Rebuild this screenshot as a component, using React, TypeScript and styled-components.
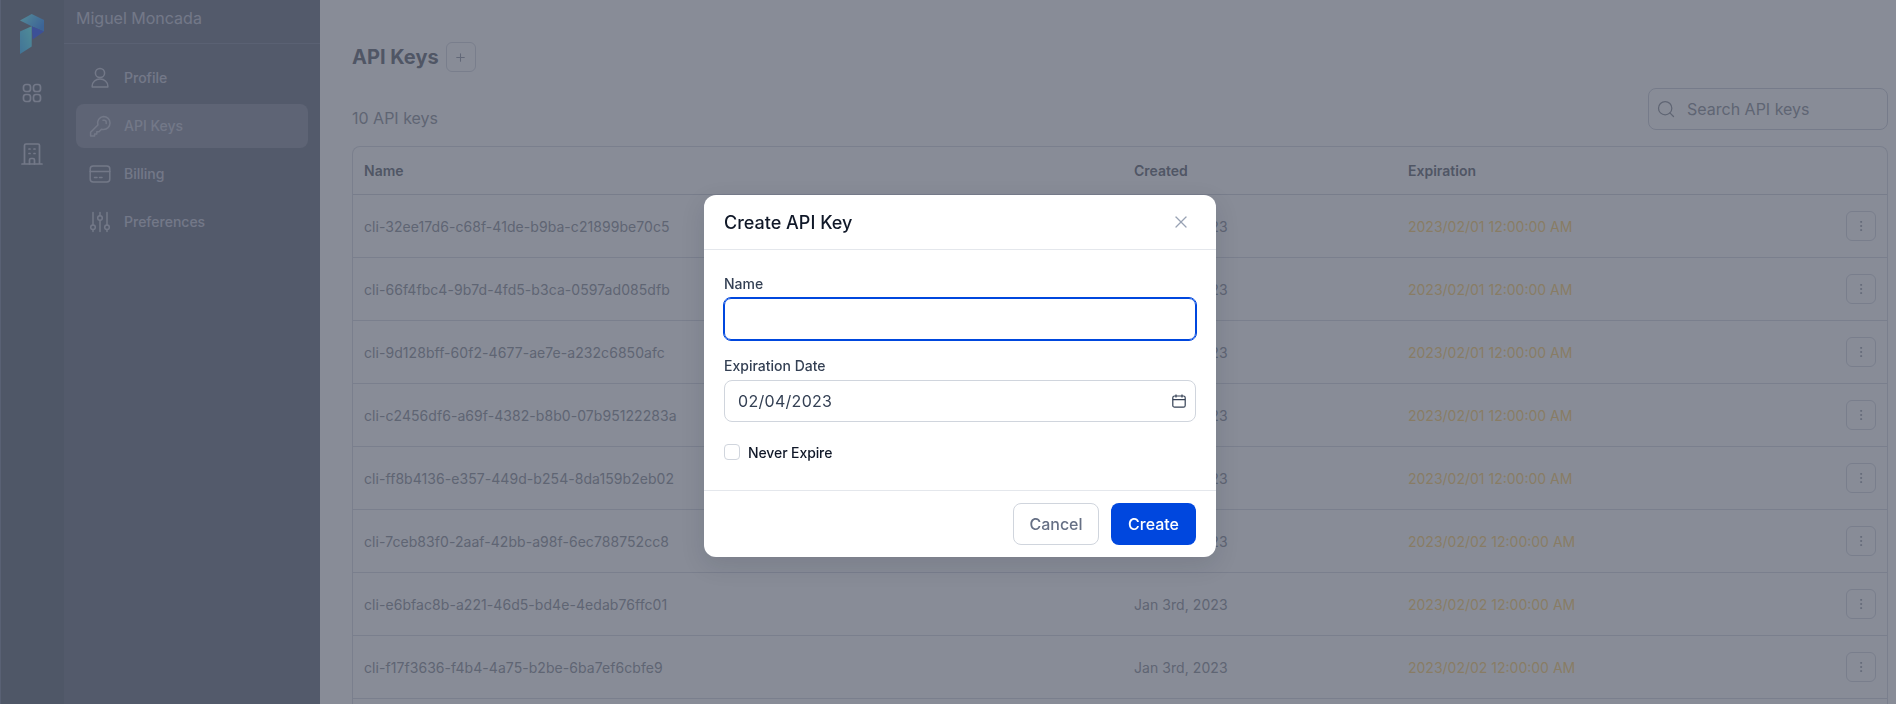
import React from 'react'
import styled, { createGlobalStyle } from 'styled-components'
import { X, Search, Plus, EllipsisVertical } from 'lucide-react'

const keys = [
  { name: 'cli-32ee17d6-c68f-41de-b9ba-c21899be70c5', expires: '2023/02/01 12:00:00 AM' },
  { name: 'cli-66f4fbc4-9b7d-4fd5-b3ca-0597ad085dfb', expires: '2023/02/01 12:00:00 AM' },
  { name: 'cli-9d128bff-60f2-4677-ae7e-a232c6850afc', expires: '2023/02/01 12:00:00 AM' },
  { name: 'cli-c2456df6-a69f-4382-b8b0-07b95122283a', expires: '2023/02/01 12:00:00 AM' },
  { name: 'cli-ff8b4136-e357-449d-b254-8da159b2eb02', expires: '2023/02/01 12:00:00 AM' },
  { name: 'cli-7ceb83f0-2aaf-42bb-a98f-6ec788752cc8', expires: '2023/02/02 12:00:00 AM' },
  { name: 'cli-e6bfac8b-a221-46d5-bd4e-4edab76ffc01', expires: '2023/02/02 12:00:00 AM' },
  { name: 'cli-f17f3636-f4b4-4a75-b2be-6ba7ef6cbfe9', expires: '2023/02/02 12:00:00 AM' }
]

const UserIcon = () => (
  <NavSvg viewBox="0 0 24 24">
    <circle cx="12" cy="7" r="4.600" />
    <path d="M4.200 21v-1c0-4 3.500-7 7.800-7s7.800 3 7.800 7v1z" />
  </NavSvg>
)

const KeyIcon = () => (
  <NavSvg viewBox="0 0 24 24">
    <path d="M15.500 2.500a6.500 6.500 0 0 1 0 13c-.7 0-1.400-.1-2-.3L11 17.700H8.800v2.200H6.600v2H2.600v-3.600l7.300-7.300a6.500 6.500 0 0 1 5.600-8.500z" />
    <path d="M15 6.200h1.200a2 2 0 0 1 2 2v1.200" />
  </NavSvg>
)

const CardIcon = () => (
  <NavSvg viewBox="0 0 24 24">
    <rect x="2.200" y="4" width="19.600" height="16" rx="3" />
    <path d="M2.200 9.500h19.600M6.500 15.500h2.500M11.500 15.500h2.500" />
  </NavSvg>
)

const SlidersIcon = () => (
  <NavSvg viewBox="0 0 24 24">
    <path d="M5 2.500v12.500M5 19.500v2M12 2.500v3M12 10.500v11M19 2.500v12.500M19 19.500v2" />
    <circle cx="5" cy="17.200" r="2.300" />
    <circle cx="12" cy="8" r="2.300" />
    <circle cx="19" cy="17.200" r="2.300" />
  </NavSvg>
)

export default function App() {
  return (
    <>
      <GlobalStyle />
      <Page>
        <Rail>
          <Logo viewBox="0 0 24 40">
            <defs>
              <linearGradient id="logoTop" x1="0" y1="0" x2="1" y2="0.6">
                <stop offset="0" stopColor="#99ffff" />
                <stop offset="1" stopColor="#67afff" />
              </linearGradient>
              <linearGradient id="logoLeft" x1="0" y1="1" x2="1" y2="0">
                <stop offset="0" stopColor="#71cdff" />
                <stop offset="1" stopColor="#8fffff" />
              </linearGradient>
            </defs>
            <polygon points="0,6.500 11.700,0 24,6 24,17.500 11.700,12.300" fill="url(#logoTop)" />
            <polygon points="11.700,12.300 24,17.500 12.600,25.500" fill="#6787ff" />
            <polygon points="0,17.500 11.700,12.300 11.700,32.500 0,40" fill="url(#logoLeft)" />
          </Logo>
          <RailIcon viewBox="0 0 24 24">
            <rect x="3.500" y="3.500" width="7" height="7" rx="2.500" />
            <rect x="13.500" y="3.500" width="7" height="7" rx="2.500" />
            <rect x="3.500" y="13.500" width="7" height="7" rx="2.500" />
            <rect x="13.500" y="13.500" width="7" height="7" rx="2.500" />
          </RailIcon>
          <RailIcon viewBox="0 0 24 24">
            <path d="M2 22h20M4.500 22V3.500a1.500 1.500 0 0 1 1.500-1.500h12a1.500 1.500 0 0 1 1.500 1.500V22" />
            <path d="M9.500 22v-4a1.500 1.500 0 0 1 1.500-1.500h2a1.500 1.500 0 0 1 1.500 1.500v4" />
            <path d="M9 7h1M14 7h1M9 11.500h1M14 11.500h1" />
          </RailIcon>
        </Rail>

        <Sidebar>
          <UserName>Miguel Moncada</UserName>
          <Nav>
            <NavItem>
              <UserIcon />
              Profile
            </NavItem>
            <NavItem $active>
              <KeyIcon />
              API Keys
            </NavItem>
            <NavItem>
              <CardIcon />
              Billing
            </NavItem>
            <NavItem>
              <SlidersIcon />
              Preferences
            </NavItem>
          </Nav>
        </Sidebar>

        <Main>
          <TitleRow>
            <Title>API Keys</Title>
            <SquareButton>
              <Plus size={13} strokeWidth={2} />
            </SquareButton>
          </TitleRow>
          <Toolbar>
            <Count>10 API keys</Count>
            <SearchBox>
              <Search size={20} strokeWidth={1.5} />
              Search API keys
            </SearchBox>
          </Toolbar>
          <Table>
            <HeadRow>
              <span>Name</span>
              <span>Created</span>
              <span>Expiration</span>
            </HeadRow>
            {keys.map((k) => (
              <Row key={k.name}>
                <span>{k.name}</span>
                <span>Jan 3rd, 2023</span>
                <Expires>{k.expires}</Expires>
                <SquareButton>
                  <EllipsisVertical size={14} strokeWidth={1.6} />
                </SquareButton>
              </Row>
            ))}
          </Table>
        </Main>
      </Page>

      <Overlay>
        <Dialog>
          <DialogHeader>
            <DialogTitle>Create API Key</DialogTitle>
            <CloseButton>
              <X size={20} strokeWidth={1.5} />
            </CloseButton>
          </DialogHeader>
          <DialogBody>
            <Field>
              <Label>Name</Label>
              <FocusedInput />
            </Field>
            <Field>
              <Label>Expiration Date</Label>
              <DateInput>
                02/04/2023
                <CalendarSvg viewBox="0 0 16 16">
                  <rect x="1.800" y="3" width="12.400" height="11.200" rx="1.800" />
                  <path d="M5 1.500v3M11 1.500v3M1.800 6.600h12.400" />
                </CalendarSvg>
              </DateInput>
            </Field>
            <CheckRow>
              <CheckBox />
              Never Expire
            </CheckRow>
          </DialogBody>
          <DialogFooter>
            <CancelButton>Cancel</CancelButton>
            <CreateButton>Create</CreateButton>
          </DialogFooter>
        </Dialog>
      </Overlay>
    </>
  )
}

const GlobalStyle = createGlobalStyle`
  html, body {
    margin: 0;
    height: 100%;
    overflow: hidden;
    background: #fff;
    font-family: Inter, "Liberation Sans", sans-serif;
  }
  * {
    box-sizing: border-box;
  }
`

const Page = styled.div`
  display: flex;
  height: 704px;
  overflow: hidden;
`

const Rail = styled.div`
  width: 64px;
  flex-shrink: 0;
  display: flex;
  flex-direction: column;
  align-items: center;
  padding-top: 14px;
  gap: 37px;
  background: #8d959f;
  border-left: 1px solid #a0a8b8;
`

const Logo = styled.svg`
  width: 24px;
  height: 40px;
  margin-bottom: -10px;
  margin-left: -1px;
`

const RailIcon = styled.svg`
  width: 24px;
  height: 24px;
  margin-left: -1px;
  fill: none;
  stroke: #d4d7e0;
  stroke-width: 1.700;
  stroke-linecap: round;
  stroke-linejoin: round;
`

const Sidebar = styled.div`
  width: 256px;
  flex-shrink: 0;
  background: #959ba7;
`

const UserName = styled.div`
  height: 44px;
  padding: 8px 12px 0;
  font-size: 16px;
  line-height: 20px;
  color: #d4d7e0;
  border-bottom: 1px solid #a3a9b6;
`

const Nav = styled.nav`
  display: flex;
  flex-direction: column;
  gap: 4px;
  padding: 12px;
`

const NavItem = styled.div<{ $active?: boolean }>`
  display: flex;
  align-items: center;
  gap: 12px;
  height: 44px;
  padding: 0 0 1px 12px;
  border-radius: 8px;
  font-size: 14px;
  font-weight: 500;
  color: #d4d7e0;
  background: ${(props) => (props.$active ? '#aaaeba' : 'transparent')};
`

const NavSvg = styled.svg`
  width: 24px;
  height: 24px;
  fill: none;
  stroke: #d4d7e0;
  stroke-width: 1.500;
  stroke-linecap: round;
  stroke-linejoin: round;
`

const Main = styled.main`
  flex: 1;
  min-width: 0;
  padding: 42px 8px 0 32px;
  background: #fff;
`

const TitleRow = styled.div`
  display: flex;
  align-items: center;
  gap: 7px;
  height: 30px;
`

const Title = styled.h1`
  margin: 0;
  font-size: 20px;
  font-weight: 700;
  color: #8f939b;
`

const SquareButton = styled.div`
  width: 30px;
  height: 30px;
  display: flex;
  align-items: center;
  justify-content: center;
  border: 1px solid #e0e2e8;
  border-radius: 6px;
  color: #b3b7c0;
`

const Toolbar = styled.div`
  display: flex;
  justify-content: space-between;
  align-items: center;
  margin-top: 16px;
`

const Count = styled.div`
  margin-top: 18px;
  font-size: 16px;
  color: #adb0b7;
`

const SearchBox = styled.div`
  display: flex;
  align-items: center;
  gap: 11px;
  width: 240px;
  height: 42px;
  padding-left: 7px;
  border: 1px solid #dadde4;
  border-radius: 8px;
  font-size: 16px;
  color: #adb0b7;
`

const Table = styled.div`
  margin-top: 16px;
  min-height: 600px;
  border: 1px solid #e3e5ea;
  border-bottom: none;
  border-radius: 8px 8px 0 0;
`

const HeadRow = styled.div`
  display: grid;
  grid-template-columns: 770px 274px 1fr;
  align-items: center;
  height: 48px;
  padding: 0 11px;
  border-bottom: 1px solid #dfe1e6;
  font-size: 14px;
  font-weight: 600;
  color: #8f939b;
`

const Row = styled.div`
  display: grid;
  grid-template-columns: 770px 274px 1fr 30px;
  align-items: center;
  height: 63px;
  padding: 0 11px;
  border-bottom: 1px solid #e3e5ea;
  font-size: 14px;
  letter-spacing: 0.06px;
  color: #adb0b7;
`

const Expires = styled.span`
  letter-spacing: 0;
  color: #ffdf9a;
`

const Overlay = styled.div`
  position: fixed;
  inset: 0;
  display: flex;
  justify-content: center;
  align-items: flex-start;
  padding: 195px 0 0 24px;
  background: rgba(17, 25, 47, 0.5);
`

const Dialog = styled.div`
  width: 512px;
  background: #fff;
  border-radius: 12px;
  box-shadow: 0 8px 24px rgba(16, 24, 40, 0.12);
`

const DialogHeader = styled.div`
  display: flex;
  align-items: center;
  justify-content: space-between;
  height: 55px;
  padding: 0 25px 0 20px;
  border-bottom: 1px solid #e4e7ec;
`

const DialogTitle = styled.h2`
  margin: 0;
  font-size: 18px;
  font-weight: 500;
  color: #101828;
`

const CloseButton = styled.div`
  display: flex;
  color: #98a2b3;
`

const DialogBody = styled.div`
  display: flex;
  flex-direction: column;
  gap: 16px;
  padding: 24px 20px 28px;
`

const Field = styled.div`
  display: flex;
  flex-direction: column;
  gap: 4px;
`

const Label = styled.label`
  font-size: 14px;
  line-height: 20px;
  font-weight: 500;
  color: #344054;
`

const FocusedInput = styled.div`
  height: 42px;
  border: 1px solid #0047de;
  outline: 1px solid #0047de;
  border-radius: 7px;
  background: #fff;
`

const DateInput = styled.div`
  display: flex;
  align-items: center;
  justify-content: space-between;
  height: 42px;
  padding: 0 8px 0 13px;
  border: 1px solid #d0d5dd;
  border-radius: 8px;
  font-size: 16px;
  letter-spacing: 0.3px;
  color: #344054;
`

const CalendarSvg = styled.svg`
  width: 16px;
  height: 16px;
  fill: none;
  stroke: #344054;
  stroke-width: 1.200;
`

const CheckRow = styled.div`
  display: flex;
  align-items: center;
  gap: 8px;
  height: 20px;
  margin-top: 4px;
  font-size: 14px;
  font-weight: 500;
  letter-spacing: -0.1px;
  color: #101828;
`

const CheckBox = styled.span`
  width: 16px;
  height: 16px;
  border: 1px solid #d0d5dd;
  border-radius: 4px;
`

const DialogFooter = styled.div`
  display: flex;
  justify-content: flex-end;
  gap: 12px;
  padding: 12px 20px;
  border-top: 1px solid #e4e7ec;
`

const CancelButton = styled.div`
  display: flex;
  align-items: center;
  justify-content: center;
  width: 86px;
  height: 42px;
  border: 1px solid #d0d5dd;
  border-radius: 8px;
  font-size: 16px;
  font-weight: 500;
  color: #667085;
`

const CreateButton = styled.div`
  display: flex;
  align-items: center;
  justify-content: center;
  width: 85px;
  height: 42px;
  border-radius: 8px;
  background: #0047de;
  font-size: 16px;
  font-weight: 500;
  color: #fff;
`
